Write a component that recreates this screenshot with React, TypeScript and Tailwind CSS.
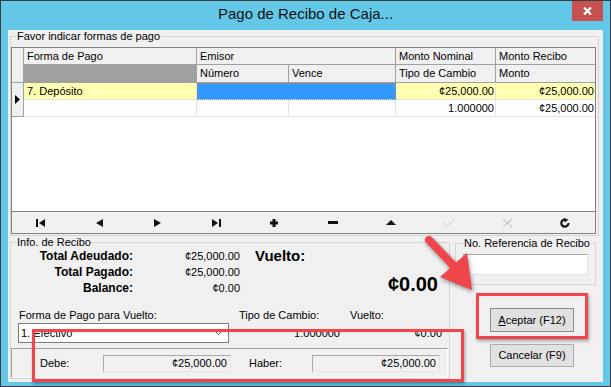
import React from 'react';

// Windows-style "Pago de Recibo de Caja" dialog with the red callouts on top.

const ui = "font-['Liberation_Sans',Arial,sans-serif]";

function NavIcon({ i }: { i: number }) {
  const dark = '#111';
  const off = '#b4b4b4';
  switch (i) {
    case 0:
      return (
        <svg width="10" height="8" viewBox="0 0 10 8">
          <rect x="0" y="0" width="2" height="8" fill={dark} />
          <path d="M9 0 L3 4 L9 8 Z" fill={dark} />
        </svg>
      );
    case 1:
      return (
        <svg width="7" height="8" viewBox="0 0 7 8">
          <path d="M7 0 L0 4 L7 8 Z" fill={dark} />
        </svg>
      );
    case 2:
      return (
        <svg width="7" height="8" viewBox="0 0 7 8">
          <path d="M0 0 L7 4 L0 8 Z" fill={dark} />
        </svg>
      );
    case 3:
      return (
        <svg width="10" height="8" viewBox="0 0 10 8">
          <path d="M1 0 L7 4 L1 8 Z" fill={dark} />
          <rect x="8" y="0" width="2" height="8" fill={dark} />
        </svg>
      );
    case 4:
      return (
        <svg width="8" height="8" viewBox="0 0 8 8">
          <rect x="2.5" y="0" width="3" height="8" fill={dark} />
          <rect x="0" y="2.5" width="8" height="3" fill={dark} />
        </svg>
      );
    case 5:
      return (
        <svg width="10" height="3" viewBox="0 0 10 3">
          <rect x="0" y="0" width="10" height="3" fill={dark} />
        </svg>
      );
    case 6:
      return (
        <svg width="10" height="5" viewBox="0 0 10 5">
          <path d="M0 5 L5 0 L10 5 Z" fill={dark} />
        </svg>
      );
    case 7:
      return (
        <svg width="13" height="9" viewBox="0 0 13 9">
          <path d="M1 5 L4 8 L12 1" fill="none" stroke={off} strokeWidth="1" strokeDasharray="2 1" />
        </svg>
      );
    case 8:
      return (
        <svg width="11" height="10" viewBox="0 0 11 10">
          <path d="M1 1 L10 9 M10 1 L1 9" fill="none" stroke={off} strokeWidth="1" />
        </svg>
      );
    default:
      return (
        <svg width="11" height="10" viewBox="0 0 11 10">
          <path d="M8.5 5 A3.6 3.6 0 1 1 5 1.5" fill="none" stroke={dark} strokeWidth="2.2" />
          <path d="M4 0 L8.5 1.8 L4.5 4.5 Z" fill={dark} />
        </svg>
      );
  }
}

function ReadBox({ value }: { value: string }) {
  return (
    <div className="w-[128px] h-[17px] bg-[#f0f0f0] border border-[#a8a8a8] border-b-[#e3e3e3] border-r-[#e3e3e3] text-right pr-[3px] leading-[15px]">
      {value}
    </div>
  );
}

export default function App() {
  const hd = 'bg-[#f0f0f0] border-r border-b border-[#a0a0a0] pl-[3px] leading-[16px] whitespace-nowrap';
  const cell = 'border-r border-b border-[#e2e2e2] leading-[16px] whitespace-nowrap';

  return (
    <div className={`${ui} relative w-[611px] h-[387px] bg-[#63c7e8] border border-[#3c3c3c] flex flex-col text-[11px] text-black`}>
      {/* title bar */}
      <div className="h-[29px] grid grid-cols-[1fr_auto_1fr] shrink-0">
        <div />
        <div className="pt-[4px] text-[15px] leading-[18px] text-[#111]">Pago de Recibo de Caja...</div>
        <div className="flex justify-end">
          <div className="w-[31px] h-[20px] mr-[7px] bg-[#c75050] flex items-center justify-center">
            <svg width="9" height="8" viewBox="0 0 9 8">
              <path d="M1 0.5 L8 7.5 M8 0.5 L1 7.5" stroke="#fff" strokeWidth="2.2" />
            </svg>
          </div>
        </div>
      </div>

      {/* client area */}
      <div className="mx-[7px] h-[352px] bg-[#f0f0f0] shrink-0">
        <fieldset className="ml-[2px] w-[589px] border border-[#d5d5d5] pb-[1px]">
          <legend className="ml-[5px] px-[1px] leading-[12px]">Favor indicar formas de pago</legend>
          <div className="mt-[5px] w-[585px] h-[165px] border border-[#828282] bg-white">
            <div className="grid grid-cols-[12px_173px_92px_107px_100px_99px] grid-rows-[17px_18px_17px_17px]">
              <div className="row-span-2 bg-[#f0f0f0] border-r border-b border-[#a0a0a0]" />
              <div className={hd}>Forma de Pago</div>
              <div className={`${hd} col-span-2`}>Emisor</div>
              <div className={hd}>Monto Nominal</div>
              <div className={`${hd} border-r-0`}>Monto Recibo</div>
              <div className="bg-[#a0a0a0] border-r border-b border-[#a0a0a0]" />
              <div className={hd}>Número</div>
              <div className={hd}>Vence</div>
              <div className={hd}>Tipo de Cambio</div>
              <div className={`${hd} border-r-0`}>Monto</div>

              <div className="row-span-2 bg-[#f0f0f0] border-r border-b border-[#a0a0a0] flex items-center justify-center">
                <svg width="5" height="9" viewBox="0 0 5 9">
                  <path d="M0 0 L5 4.5 L0 9 Z" fill="#000" />
                </svg>
              </div>
              <div className={`${cell} bg-[#ffffb4] pl-[3px]`}>7. Depósito</div>
              <div className="col-span-2 bg-[#3399ff] border border-dotted border-[#c9803a] border-b-[#e2e2e2]" />
              <div className={`${cell} bg-[#ffffb4] text-right pr-[1px]`}>¢25,000.00</div>
              <div className={`${cell} bg-[#ffffb4] text-right pr-[1px] border-r-0`}>¢25,000.00</div>
              <div className={cell} />
              <div className={cell} />
              <div className={cell} />
              <div className={`${cell} text-right pr-[1px]`}>1.000000</div>
              <div className={`${cell} text-right pr-[1px] border-r-0`}>¢25,000.00</div>
            </div>
          </div>
          <div className="w-[585px] h-[22px] border-x border-b border-[#828282] bg-[#f0f0f0] flex">
            {Array.from({ length: 10 }).map((_, i) => (
              <div key={i} className="flex-1 flex items-center justify-center">
                <NavIcon i={i} />
              </div>
            ))}
          </div>
        </fieldset>

        <div className="flex items-start">
          {/* Info. de Recibo */}
          <fieldset className="ml-[2px] w-[440px] border border-[#d5d5d5]">
            <legend className="ml-[5px] px-[1px] leading-[12px]">Info. de Recibo</legend>
            <div className="flex">
              <div className="w-[122px] text-right text-[12px] font-bold leading-[16px]">
                <div>Total Adeudado:</div>
                <div>Total Pagado:</div>
                <div>Balance:</div>
              </div>
              <div className="w-[107px] text-right leading-[16px]">
                <div>¢25,000.00</div>
                <div>¢25,000.00</div>
                <div>¢0.00</div>
              </div>
              <div className="ml-[15px] w-[183px]">
                <div className="text-[15px] font-bold leading-[16px]">Vuelto:</div>
                <div className="mt-[8px] text-right text-[20px] font-bold leading-[24px]">¢0.00</div>
              </div>
            </div>

            <div className="mt-[12px] flex leading-[14px]">
              <span className="ml-[8px] w-[220px]">Forma de Pago para Vuelto:</span>
              <span className="w-[111px]">Tipo de Cambio:</span>
              <span>Vuelto:</span>
            </div>
            <div className="mt-[1px] h-[20px] flex items-center">
              <div className="ml-[7px] w-[211px] h-[20px] bg-white border border-[#7a7a7a] flex items-center justify-between pl-[2px] pr-[6px]">
                <span>1. Efectivo</span>
                <svg width="7" height="4" viewBox="0 0 7 4">
                  <path d="M0.5 0.5 L3.5 3.5 L6.5 0.5" fill="none" stroke="#606060" strokeWidth="1" />
                </svg>
              </div>
              <div className="w-[111px] text-right">1.000000</div>
              <div className="w-[102px] text-right">¢0.00</div>
            </div>
            <div className="mt-[5px] w-[437px] h-[30px] border border-[#a0a0a0] border-b-white border-r-white flex items-center">
              <span className="ml-[28px] w-[63px]">Debe:</span>
              <ReadBox value="¢25,000.00" />
              <span className="ml-[18px] w-[63px]">Haber:</span>
              <ReadBox value="¢25,000.00" />
            </div>
          </fieldset>

          <div className="ml-[5px] w-[141px] flex flex-col">
            <fieldset className="mt-[1px] border border-[#d5d5d5] pb-[9px]">
              <legend className="ml-[7px] px-[1px] leading-[12px]">No. Referencia de Recibo</legend>
              <div className="mt-[5px] ml-[7px] w-[125px] h-[21px] bg-white border border-[#a8a8a8] border-b-[#e3e3e3] border-r-[#e3e3e3]" />
            </fieldset>
            <button className="mt-[23px] ml-[35px] w-[84px] h-[24px] bg-[#e1e1e1] border border-[#8a8a8a] text-[11px]">
              <span className="underline">A</span>ceptar (F12)
            </button>
            <button className="mt-[12px] ml-[35px] w-[84px] h-[23px] bg-[#e1e1e1] border border-[#adadad] text-[11px]">
              Cancelar (F9)
            </button>
          </div>
        </div>
      </div>

      {/* annotation overlays */}
      <div className="absolute left-[475px] top-[292px] w-[112px] h-[46px] border-[3px] border-[#f0454a] shadow-[1px_2px_3px_rgba(0,0,0,0.35)]" />
      <div className="absolute left-[31px] top-[328px] w-[432px] h-[53px] border-[3px] border-[#f0454a] shadow-[1px_2px_3px_rgba(0,0,0,0.35)]" />
      <svg className="absolute left-[414px] top-[226px] drop-shadow-[1px_2px_2px_rgba(0,0,0,0.4)]" width="70" height="70" viewBox="414 226 70 70">
        <line x1="428" y1="239" x2="452" y2="264" stroke="#f0454a" strokeWidth="8" strokeLinecap="round" />
        <path d="M439 276 L466 252 L471 289 Z" fill="#f0454a" />
      </svg>
    </div>
  );
}
